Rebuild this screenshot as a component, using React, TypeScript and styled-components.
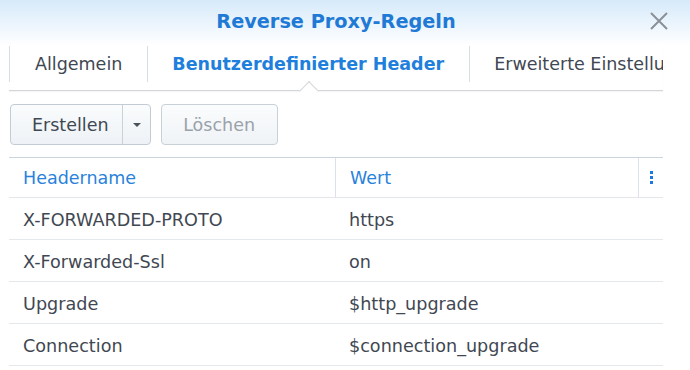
import React from "react";
import styled, { createGlobalStyle } from "styled-components";

const Global = createGlobalStyle`
  html, body { margin: 0; padding: 0; background: #fff; }
  body { font-family: "DejaVu Sans", Verdana, sans-serif; }
  * { box-sizing: border-box; }
`;

const Window = styled.div`
  width: 690px;
  height: 370px;
  overflow: hidden;
  background: #fff;
  display: flex;
  flex-direction: column;
`;

const TitleBar = styled.div`
  height: 45px;
  flex: none;
  display: grid;
  grid-template-columns: 1fr auto 1fr;
  align-items: center;
  padding: 0 27px 0 9px;
  background: linear-gradient(180deg, #d6eafa 0%, #ecf5fd 55%, #ffffff 100%);
`;

const Title = styled.div`
  grid-column: 2;
  font-size: 19.3px;
  font-weight: bold;
  color: #1f7ad6;
  padding-bottom: 3px;
`;

const CloseButton = styled.button`
  grid-column: 3;
  justify-self: end;
  margin-right: -9px;
  width: 26px;
  height: 26px;
  border: none;
  background: transparent;
  padding: 0;
  display: flex;
  align-items: center;
  justify-content: center;
  margin-bottom: 4px;
`;

const Body = styled.div`
  padding: 0 27px 0 9px;
  display: flex;
  flex-direction: column;
`;

const TabBar = styled.div`
  display: flex;
  height: 46px;
  padding: 1px 0 8px;
  border-bottom: 1px solid #d3d7db;
  box-shadow: 0 1px 1px rgba(0, 0, 0, 0.04);
  white-space: nowrap;
`;

const Tab = styled.div<{ $active?: boolean; $first?: boolean }>`
  position: relative;
  flex: none;
  height: 36px;
  display: flex;
  align-items: center;
  padding: 0 25px 0 ${(p) => (p.$first ? 25 : 24)}px;
  border-left: 1px solid #d5dde5;
  font-size: 17.5px;
  font-weight: ${(p) => (p.$active ? "bold" : "normal")};
  color: ${(p) => (p.$active ? "#1f7fdc" : "#3f4852")};
  ${(p) =>
    p.$active &&
    `
    &::after {
      content: "";
      position: absolute;
      left: 50%;
      bottom: -9px;
      width: 13px;
      height: 13px;
      margin-left: -6.5px;
      background: #fff;
      border-top: 1px solid #d3d7db;
      border-left: 1px solid #d3d7db;
      transform: translateY(50%) rotate(45deg);
    }
  `}
`;

const TabClip = styled.div`
  flex: 1;
  min-width: 0;
  overflow: hidden;
  display: flex;
`;

const Toolbar = styled.div`
  display: flex;
  gap: 10px;
  margin-top: 13px;
  margin-left: 1px;
`;

const SplitButton = styled.div`
  display: flex;
  height: 41px;
  border: 1px solid #c3ccd5;
  border-radius: 4px;
  background: linear-gradient(180deg, #fafcfd 0%, #eef2f6 100%);
  overflow: hidden;
`;

const ButtonPart = styled.button<{ $disabled?: boolean }>`
  border: none;
  background: transparent;
  font-family: inherit;
  font-size: 17.5px;
  color: ${(p) => (p.$disabled ? "#9aa2aa" : "#3f4852")};
  padding: 0 13px 0 21px;
  height: 100%;
`;

const CaretPart = styled.button`
  border: none;
  border-left: 1px solid #c9d1d9;
  background: transparent;
  width: 28px;
  height: 100%;
  display: flex;
  align-items: center;
  justify-content: center;
  padding: 0 0 0 1px;
  &::before {
    content: "";
    border-left: 4px solid transparent;
    border-right: 4px solid transparent;
    border-top: 4px solid #4a525a;
    margin-top: 1px;
  }
`;

const PlainButton = styled.button`
  height: 41px;
  width: 117px;
  border: 1px solid #c8d0d8;
  border-radius: 4px;
  background: linear-gradient(180deg, #fafcfd 0%, #f0f3f6 100%);
  font-family: inherit;
  font-size: 17.5px;
  color: #9aa2aa;
  padding: 0;
`;

const Table = styled.div`
  margin-top: 12px;
  display: grid;
  grid-template-columns: 326px 303px 25px;
  border-top: 1px solid #c9d4df;
`;

const HeadCell = styled.div<{ $sep?: boolean }>`
  height: 40px;
  display: flex;
  align-items: center;
  padding-left: 14px;
  font-size: 17.5px;
  color: #2a82da;
  border-bottom: 1px solid #e2e7ec;
  border-left: ${(p) => (p.$sep ? "1px solid #dbe2e9" : "none")};
`;

const MenuCell = styled.div`
  height: 40px;
  display: flex;
  align-items: center;
  justify-content: center;
  border-bottom: 1px solid #e2e7ec;
  border-left: 1px solid #dbe2e9;
  padding-left: 1px;
`;

const Dots = styled.span`
  display: flex;
  flex-direction: column;
  gap: 2px;
  span {
    width: 3px;
    height: 3px;
    background: #1e78e0;
  }
`;

const Cell = styled.div<{ $span?: boolean }>`
  height: 42px;
  display: flex;
  align-items: center;
  padding: 2px 0 0 14px;
  font-size: 17.6px;
  color: #3f4852;
  border-bottom: 1px solid #e3e8ed;
  grid-column: ${(p) => (p.$span ? "span 2" : "auto")};
`;

const rows: [string, string][] = [
  ["X-FORWARDED-PROTO", "https"],
  ["X-Forwarded-Ssl", "on"],
  ["Upgrade", "$http_upgrade"],
  ["Connection", "$connection_upgrade"],
];

export default function App() {
  return (
    <Window>
      <Global />
      <TitleBar>
        <Title>Reverse Proxy-Regeln</Title>
        <CloseButton aria-label="Schließen">
          <svg width="18" height="18" viewBox="0 0 18 18">
            <path d="M1 1 L17 17 M17 1 L1 17" stroke="#8b9096" strokeWidth="2" />
          </svg>
        </CloseButton>
      </TitleBar>
      <Body>
        <TabBar>
          <Tab $first>Allgemein</Tab>
          <Tab $active>Benutzerdefinierter Header</Tab>
          <TabClip>
            <Tab>Erweiterte Einstellungen</Tab>
          </TabClip>
        </TabBar>
        <Toolbar>
          <SplitButton>
            <ButtonPart>Erstellen</ButtonPart>
            <CaretPart aria-label="Mehr" />
          </SplitButton>
          <PlainButton disabled>Löschen</PlainButton>
        </Toolbar>
        <Table>
          <HeadCell>Headername</HeadCell>
          <HeadCell $sep>Wert</HeadCell>
          <MenuCell>
            <Dots>
              <span />
              <span />
              <span />
            </Dots>
          </MenuCell>
          {rows.map(([name, value]) => (
            <React.Fragment key={name}>
              <Cell>{name}</Cell>
              <Cell $span>{value}</Cell>
            </React.Fragment>
          ))}
        </Table>
      </Body>
    </Window>
  );
}
